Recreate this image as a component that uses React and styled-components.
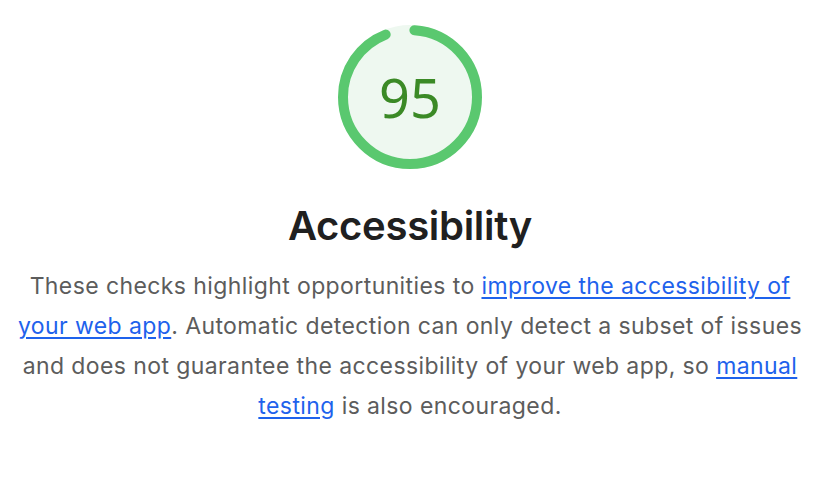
import React from "react";
import styled, { createGlobalStyle } from "styled-components";

const GlobalStyle = createGlobalStyle`
  body {
    margin: 0;
    background: #fff;
    font-family: Inter, "Liberation Sans", Arial, sans-serif;
  }
`;

const Page = styled.div`
  width: 820px;
  display: flex;
  flex-direction: column;
  align-items: center;
  padding-top: 25px;
`;

const Gauge = styled.div`
  position: relative;
  width: 144px;
  height: 144px;
  svg {
    display: block;
    transform: rotate(-90deg);
  }
`;

const Score = styled.div`
  position: absolute;
  inset: 0;
  display: flex;
  align-items: center;
  justify-content: center;
  font-family: "Noto Sans", "DejaVu Sans", sans-serif;
  font-size: 54px;
  color: #3b8a26;
  line-height: 1;
`;

const Title = styled.h1`
  margin: 33px 0 0;
  font-size: 40px;
  font-weight: 600;
  color: #202020;
  line-height: 48px;
  letter-spacing: -0.3px;
`;

const Desc = styled.p`
  margin: 16px 0 0;
  width: 800px;
  text-align: center;
  font-size: 23px;
  letter-spacing: 0.4px;
  line-height: 40px;
  color: #5c5c5c;
  a {
    color: #1e62ec;
    text-decoration: underline;
    text-underline-offset: 3px;
  }
`;

const ScoreGauge = ({ value }) => {
  const r = 67;
  const c = 2 * Math.PI * r;
  const len = (value / 100) * c;
  return (
    <Gauge>
      <svg width="144" height="144" viewBox="0 0 144 144">
        <circle cx="72" cy="72" r="72" fill="#eef8f0" />
        <circle
          cx="72"
          cy="72"
          r={r}
          fill="none"
          stroke="#5ac86f"
          strokeWidth="10"
          strokeLinecap="round"
          strokeDasharray={`${len - 9} ${c}`}
          strokeDashoffset={-4.5}
        />
      </svg>
      <Score>{value}</Score>
    </Gauge>
  );
};

export default function App() {
  return (
    <>
      <GlobalStyle />
      <Page>
        <ScoreGauge value={95} />
        <Title>Accessibility</Title>
        <Desc>
          These checks highlight opportunities to{" "}
          <a href="#">improve the accessibility of your web app</a>. Automatic
          detection can only detect a subset of issues and does not guarantee
          the accessibility of your web app, so{" "}
          <a href="#">manual testing</a> is also encouraged.
        </Desc>
      </Page>
    </>
  );
}
